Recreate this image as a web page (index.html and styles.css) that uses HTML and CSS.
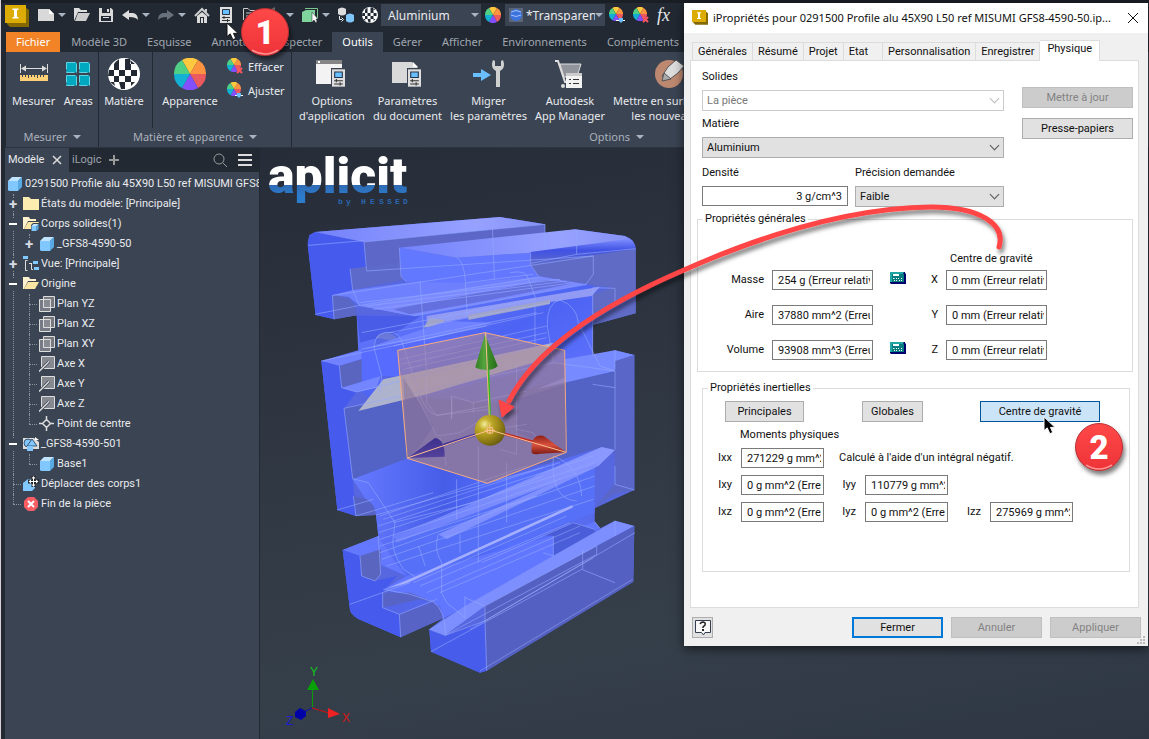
FILE: index.html
```html
<!DOCTYPE html>
<html lang="fr">
<head>
<meta charset="utf-8">
<title>iPropriétés</title>
<link rel="stylesheet" href="styles.css">
</head>
<body>
<svg class="defs" aria-hidden="true">
  <defs>
    <linearGradient id="logoFill" x1="0" y1="0" x2="0" y2="1"><stop offset=".65" stop-color="#fff"/><stop offset=".66" stop-color="#2f6bb4"/><stop offset=".85" stop-color="#2b7ccc"/></linearGradient>
    <linearGradient id="topFace" x1="0" x2="1"><stop offset="0" stop-color="#7482fb"/><stop offset=".7" stop-color="#97a2ff"/><stop offset="1" stop-color="#8490f4"/></linearGradient>
    <linearGradient id="darkBand" x1="0" y1="0" x2="0" y2="1"><stop offset="0" stop-color="#8090ff"/><stop offset=".45" stop-color="#4052e4"/><stop offset="1" stop-color="#5d69c9"/></linearGradient>
    <linearGradient id="midBlue" x1="0" x2="1" y2="1"><stop offset="0" stop-color="#6f82ff"/><stop offset=".5" stop-color="#4d63f3"/><stop offset="1" stop-color="#6477ff"/></linearGradient>
    <linearGradient id="lowBlue" x1="0" x2="1"><stop offset="0" stop-color="#667aff"/><stop offset=".35" stop-color="#465de8"/><stop offset=".6" stop-color="#5670ff"/><stop offset="1" stop-color="#586ae8"/></linearGradient>
    <linearGradient id="sheen" x1="0" x2="1"><stop offset="0" stop-color="#6c7ffb"/><stop offset="1" stop-color="#8c9aff"/></linearGradient>
    <radialGradient id="ball" cx=".32" cy=".3" r=".75"><stop offset="0" stop-color="#f4ec9a"/><stop offset=".25" stop-color="#c4b02c"/><stop offset=".6" stop-color="#a08b19"/><stop offset="1" stop-color="#6b5d10"/></radialGradient>
    <linearGradient id="coneG" x1="0" x2="1"><stop offset="0" stop-color="#2f7d22"/><stop offset=".4" stop-color="#56a53e"/><stop offset=".6" stop-color="#3d8e2a"/><stop offset="1" stop-color="#276b1c"/></linearGradient>
    <linearGradient id="coneR" x1="0" y1="0" x2="0" y2="1"><stop offset="0" stop-color="#8e2018"/><stop offset=".5" stop-color="#d8503c"/><stop offset="1" stop-color="#7c1a14"/></linearGradient>
    <linearGradient id="coneB" x1="0" y1="0" x2="0" y2="1"><stop offset="0" stop-color="#3d318e"/><stop offset="1" stop-color="#54429c"/></linearGradient>
    <linearGradient id="badgeFill" x1="0" y1="0" x2="0" y2="1"><stop offset="0" stop-color="#ff4848"/><stop offset="1" stop-color="#ee3338"/></linearGradient>
    <filter id="shadow" x="-20%" y="-20%" width="150%" height="150%"><feDropShadow dx="2" dy="4" stdDeviation="2" flood-color="#000" flood-opacity=".5"/></filter>

    <symbol id="wheel" viewBox="0 0 32 32">
      <path d="M16 16L8 2A16 16 0 0 1 24 2Z" fill="#ffc83e"/><path d="M16 16L24 2A16 16 0 0 1 32 16Z" fill="#ff9440"/>
      <path d="M16 16H32A16 16 0 0 1 24 30Z" fill="#ea5a5f"/><path d="M16 16L24 30A16 16 0 0 1 8 30Z" fill="#8450ff"/>
      <path d="M16 16L8 30A16 16 0 0 1 0 16Z" fill="#12b0d2"/><path d="M16 16H0A16 16 0 0 1 8 2Z" fill="#4fcf85"/>
    </symbol>
    <symbol id="checkball" viewBox="0 0 32 32">
      <circle cx="16" cy="16" r="16" fill="#fff"/>
      <g fill="#222933"><path d="M10 2q-3 2-4 4h5V1zM17 1h5v5h-5zM1 12h5v6H0zM6 6h5v6H6zM11 12h6v6h-6zM17 6h6v6h-6zM23 12h6v6h-6zM6 18h5v6H6zM17 18h6v6h-6zM11 24h6v7h-4zM23 24h4l-4 4zM22 2l5 4h-4zM2 24h4l1 4z"/></g>
    </symbol>
    <symbol id="cube" viewBox="0 0 16 16"><path d="M1 5L5 1H15L11 5Z" fill="#c0e4ff"/><path d="M1 5H11V15H2L1 14Z" fill="#80c8ff"/><path d="M11 5L15 1V11L11 15Z" fill="#58a9e4"/></symbol>
    <symbol id="folder" viewBox="0 0 16 16"><path d="M0 1H6L8 3H16V14H0Z" fill="#fdecb0"/></symbol>
    <symbol id="folderOpen" viewBox="0 0 16 16"><path d="M0 1H6L7 3H13V5H5L1 13H0Z" fill="#fff3cf"/><path d="M5 6H16L12 13H1Z" fill="#fbe5a2"/></symbol>
    <symbol id="folderBody" viewBox="0 0 16 16"><use href="#folderOpen"/><path d="M8 9L10 7H16V13L14 16H8Z" fill="#3b4453"/><use href="#cube" x="8" y="7" width="8" height="9"/></symbol>
    <symbol id="view" viewBox="0 0 16 16"><path d="M0 0h5v3H0zM10 5h5v3h-5zM11 11h5v3h-5z" fill="#80c8ff"/><path d="M4.500 4.500H2.500V14.500H4.500M6 7.500H9M8.500 8V13.500H10" fill="none" stroke="#ddd"/></symbol>
    <symbol id="plane" viewBox="0 0 16 16"><path d="M4.500 .5H15.500V11.500H4.500Z" fill="#77797f" stroke="#ddd"/><path d="M.5 3.500H11.500V15.500H.5Z" fill="#8f919a" fill-opacity=".7" stroke="#ddd"/><path d="M4.500 3.500V11.500H11.500" fill="none" stroke="#ddd"/></symbol>
    <symbol id="axis" viewBox="0 0 16 16"><path d="M2.500 .5H15.500V12.500H2.500Z" fill="#888a92" stroke="#ddd"/><path d="M0 15.500L10 5.500" stroke="#3b4453" stroke-width="3"/><path d="M0 15.500L10 5.500" stroke="#ddd" stroke-width="1.500"/></symbol>
    <symbol id="point" viewBox="0 0 16 16"><path d="M7.500 3.500L11.500 7.500L7.500 11.500L3.500 7.500ZM7.500 0V4M7.500 11V15M0 7.500H4M11 7.500H15" fill="none" stroke="#ddd" stroke-width="1.500"/></symbol>
    <symbol id="sketch" viewBox="0 0 16 16"><path d="M0 2H11L16 6V13H0Z" fill="#ddd"/><path d="M12 1L16 4H12Z" fill="#fff"/><circle cx="5" cy="7" r="4" fill="#80c8ff" stroke="#3b5570"/><path d="M9 3L14 10H4Z" fill="#80c8ff" stroke="#3b5570"/><path d="M4 10H10V15H4Z" fill="#80c8ff"/></symbol>
    <symbol id="move" viewBox="0 0 16 16"><path d="M0 7L5 3H12V12L9 15H0Z" fill="#80c8ff"/><path d="M10.500 0V11M5 5.500H16" stroke="#222" stroke-width="4"/><path d="M10.500 1V10M6 5.500H15" stroke="#fff"/><path d="M8.500 2.500L10.500 0L12.500 2.500ZM8.500 8.500L10.500 11L12.500 8.500ZM8 3.500L5.500 5.500L8 7.500ZM13 3.500L15.500 5.500L13 7.500Z" fill="#fff"/></symbol>
    <symbol id="end" viewBox="0 0 16 16"><path d="M5 1H11L15 5V11L11 15H5L1 11V5Z" fill="#f95d64"/><path d="M5 5L11 11M11 5L5 11" stroke="#fff" stroke-width="2"/></symbol>
    <symbol id="inv" viewBox="0 0 24 24"><path d="M2 2L20 2L24 5V22H5L2 19Z" fill="#846900"/><path d="M0 0H21V18H0Z" fill="#dcac04"/><path d="M7.500 3.500H13.500V5H12V12H13.500V13.500H7.500V12H9V5H7.500Z" fill="#fff"/></symbol>
    <symbol id="calc" viewBox="0 0 16 12"><path d="M0 0H15V1L16 2V12H1L0 11Z" fill="#00006c"/><path d="M0 0H14L13 2H2V10H0Z" fill="#20a5a5"/><path d="M2 2H14V10H2Z" fill="#077c80"/><path d="M3 2H9V4H3Z" fill="#fff"/><path d="M3 6.500h1.500M6 6.500h1M8 6.500h1M11 6.500h1M4 8.500h1M6 8.500h1M9 8.500h1M11 8.500h1" stroke="#fff"/></symbol>
    <symbol id="pref" viewBox="0 0 12 16"><path d="M0 0H12V16H0Z" fill="#dedede"/><path d="M2.500 2.500H9.500V7.500H2.500Z" fill="#69bfff" stroke="#253345"/><path d="M2 10.500H10M2 13.500H10M4 9v3M7.500 12v3" stroke="#333"/></symbol>
    <symbol id="cursor" viewBox="0 0 14 22"><path d="M1 1V16L4.500 13L7.500 19.500L10.500 18L8 12.500H13Z"/></symbol>
  </defs>
</svg>

<div class="app">
  <header class="quickbar">
    <svg class="brand"><use href="#inv"/></svg>
    <button class="pair" aria-label="Nouveau"><svg class="i16" viewBox="0 0 16 16"><path d="M0 2H11L16 7V14H0Z" fill="#d9d9d9"/><path d="M11 2L16 7H11Z" fill="#fff"/></svg><i class="caret"></i></button>
    <button aria-label="Ouvrir"><svg class="i16" viewBox="0 0 16 16"><path d="M0 14V1H5L7 3H13V5H4Z" fill="#ddd"/><path d="M4 6H16L12 14H1Z" fill="#ccc"/></svg></button>
    <button aria-label="Enregistrer"><svg class="i16" viewBox="0 0 16 16"><path d="M1 1H13L15 3V15H1Z" fill="#d9d9d9"/><path d="M4 1H12V6H4ZM3 9H13V14H3Z" fill="#222933"/><path d="M9 2H11V5H9ZM5 10H11V11H5Z" fill="#ddd"/></svg></button>
    <button class="pair" aria-label="Annuler l'action"><svg class="i16" viewBox="0 0 16 16"><path d="M0 8L7 3V6H11Q16 7 16 13Q14 10 7 10V13Z" fill="#ddd"/></svg><i class="caret"></i></button>
    <button class="pair" aria-label="Rétablir"><svg class="i16" viewBox="0 0 16 16"><path d="M16 8L9 3V6H5Q0 7 0 13Q2 10 9 10V13Z" fill="#68707b"/></svg><i class="caret"></i></button>
    <button aria-label="Accueil"><svg class="i16" viewBox="0 0 16 16"><path d="M1 9L8 2L15 9M12 2V5" fill="none" stroke="#ccc" stroke-width="2"/><path d="M3 9L8 5L13 9V16H3Z" fill="#d9d9d9"/><path d="M6 10H10V16H6Z" fill="#222933"/><path d="M7 11H9V16H7Z" fill="#ddd"/></svg></button>
    <button aria-label="Options"><svg class="i16"><use href="#pref"/></svg></button>
    <button aria-label="Mise à jour"><svg class="i16" viewBox="0 0 16 16"><path d="M1.500 13V1.500H6L8 3.500H14M4 6H12M4 9H12" fill="none" stroke="#ccc"/></svg></button>
    <button class="pair" aria-label="Sélection"><svg class="i16" viewBox="0 0 16 16"><path d="M5 2L9 0V14H5Z" fill="#666"/></svg><i class="caret"></i></button>
    <button class="pair" aria-label="Corps"><svg class="i16" viewBox="0 0 16 16"><path d="M3 1.500H15.500V12" fill="none" stroke="#7cc58f"/><path d="M0 5L4 3H13V13H11V15H0Z" fill="#7fd69c"/><path d="M10 5V15L12 13L14 16L15 14L14 12H16Z" fill="#fff" stroke="#222933" stroke-width=".5"/></svg><i class="caret"></i></button>
    <button aria-label="Convertir"><svg class="i16" viewBox="0 0 16 16"><path d="M0 2Q4-1 8 2V7Q4 10 0 7Z" fill="#ddd"/><path d="M8 8Q12 5 16 8V14Q12 17 8 14Z" fill="#7fc7fb"/><path d="M1.500 9V12.500H4M3.500 10.500L5.500 12.500L3.500 14.500" fill="none" stroke="#eee"/></svg></button>
    <button aria-label="Matériaux"><svg class="i16"><use href="#checkball"/></svg></button>
    <label class="dark-select"><select aria-label="Matière active"><option>Aluminium</option></select><i class="caret"></i></label>
    <button class="tight" aria-label="Apparences"><svg class="i16"><use href="#wheel"/></svg></button>
    <label class="dark-select swatch"><svg class="i14" viewBox="0 0 14 14"><path d="M0 0H14V14H0Z" fill="#5b6578"/><circle cx="7" cy="7" r="6" fill="#3f73dc"/><path d="M2 4Q7 1 12 4M2 7Q7 10 12 7" fill="none" stroke="#9dc2ff"/></svg><select aria-label="Apparence active"><option>*Transparent</option></select><i class="caret"></i></label>
    <button class="tight" aria-label="Ajuster l'apparence"><svg class="i16" viewBox="0 0 16 16"><use href="#wheel" width="14" height="14"/><path d="M7 13.500H16" stroke="#fff"/><path d="M10 11H14V14L12 16L10 14Z" fill="#69bfff"/></svg></button>
    <button aria-label="Effacer l'apparence"><svg class="i16" viewBox="0 0 16 16"><use href="#wheel" width="14" height="14"/><path d="M10 10L15 15M15 10L10 15" stroke="#ff5560" stroke-width="2"/></svg></button>
    <button class="fx" aria-label="Paramètres">fx</button>
  </header>

  <nav class="tabs">
    <button class="file">Fichier</button><button>Modèle 3D</button><button>Esquisse</button><button>Annoter</button><button>Inspecter</button><button class="active">Outils</button><button>Gérer</button><button>Afficher</button><button>Environnements</button><button>Compléments</button>
  </nav>

  <section class="ribbon">
    <div class="group measure">
      <div class="tools">
        <button class="tool"><svg class="i32" viewBox="0 0 32 32"><path d="M2.500 6V15M29.500 6V15M4 10.500H28" stroke="#ddd"/><path d="M3 10.500L8 7.500V13.500ZM29 10.500L24 7.500V13.500Z" fill="#ddd"/><path d="M2 17H30V23H2Z" fill="#ffcf75"/><path d="M4.500 17v2M7.500 17v2M10.500 17v3M13.500 17v2M16.500 17v2M19.500 17v3M22.500 17v2M25.500 17v2" stroke="#3b4453"/></svg>Mesurer</button>
        <button class="tool"><svg class="i32" viewBox="0 0 32 32"><path d="M4.500 4.500H14.500V14.500H4.500ZM17.500 4.500H27.500V14.500H17.500ZM4.500 17.500H14.500V27.500H4.500ZM17.500 17.500H27.500V27.500H17.500Z" fill="#00a9c0" stroke="#62d3e0" stroke-dasharray="9 2"/></svg>Areas</button>
      </div>
      <div class="group-name">Mesurer <i class="caret"></i></div>
    </div>
    <div class="group material">
      <div class="tools">
        <button class="tool first"><svg class="i32"><use href="#checkball"/></svg>Matière</button>
        <button class="tool look"><svg class="i32"><use href="#wheel"/></svg>Apparence</button>
        <div class="stack">
          <button><svg class="i16" viewBox="0 0 16 16"><use href="#wheel" width="14" height="14"/><path d="M10 10L15 15M15 10L10 15" stroke="#ff5560" stroke-width="2"/></svg>Effacer</button>
          <button><svg class="i16" viewBox="0 0 16 16"><use href="#wheel" width="14" height="14"/><path d="M8 13.500H16" stroke="#fff"/><path d="M10 11H14V14L12 16L10 14Z" fill="#69bfff"/></svg>Ajuster</button>
        </div>
      </div>
      <div class="group-name">Matière et apparence <i class="caret"></i></div>
    </div>
    <div class="group options">
      <div class="tools">
        <button class="tool"><svg class="i32" viewBox="0 0 32 32"><path d="M0 2H26V26H0Z" fill="#f3f3f3"/><path d="M0 2H26V6H0Z" fill="#858585"/><path d="M2 3h2v2H2z" fill="#fff"/><path d="M15 10H30V30H15Z" fill="#3b4453"/><use href="#pref" x="16" y="11" width="13" height="18"/></svg>Options<br>d'application</button>
        <button class="tool"><svg class="i32" viewBox="0 0 32 32"><path d="M1 4H21L27 10V25H1Z" fill="#d9d9d9"/><path d="M22 4L27 9H22Z" fill="#fff"/><path d="M16 10H31V30H16Z" fill="#3b4453"/><use href="#pref" x="17" y="11" width="13" height="18"/></svg>Paramètres<br>du document</button>
        <button class="tool"><svg class="i32" viewBox="0 0 32 32"><path d="M0 15H8V11L18 17L8 23V19H0Z" fill="#69bfff"/><path d="M20 2Q17 10 23 13V29H27V13Q33 10 30 2L28 3V8H22V3Z" fill="#d0d0d0"/></svg>Migrer<br>les paramètres</button>
        <button class="tool"><svg class="i32" viewBox="0 0 32 32"><path d="M1 3H4L11 24H15" fill="none" stroke="#ddd" stroke-width="2"/><path d="M6 6H27L23 19H10Z" fill="#92969c" stroke="#ddd"/><circle cx="9" cy="28" r="2" fill="#ddd"/><path d="M12 15H28V30H12Z" fill="#f2f2f2"/><path d="M12 15H28V18H12Z" fill="#ccc"/><path d="M15 21.500H17M19 21.500H25M15 25.500H17M19 25.500H25" stroke="#333"/></svg>Autodesk<br>App Manager</button>
        <button class="tool"><svg class="i32" viewBox="0 0 32 32"><circle cx="15" cy="16" r="14" fill="#bd8870"/><path d="M8 18L14 9L22 2L30 8L24 15L16 21Z" fill="#ddd" stroke="#555"/><path d="M10 15L17 21L8 23Z" fill="#aaa" stroke="#555"/></svg>Mettre en surbrillance<br>les nouveautés</button>
      </div>
      <div class="group-name">Options <i class="caret"></i></div>
    </div>
  </section>

  <main class="workspace">
    <aside class="browser">
      <div class="browser-tabs">
        <button class="on">Modèle <svg class="i10" viewBox="0 0 10 10"><path d="M1 1L9 9M9 1L1 9" stroke="#ddd" stroke-width="1.500"/></svg></button>
        <button>iLogic</button>
        <button aria-label="Ajouter"><svg class="i10" viewBox="0 0 10 10"><path d="M5 0V10M0 5H10" stroke="#999" stroke-width="2"/></svg></button>
        <button class="push" aria-label="Rechercher"><svg class="i14" viewBox="0 0 14 14"><circle cx="6" cy="6" r="5" fill="none" stroke="#999"/><path d="M10 10L14 14" stroke="#999"/></svg></button>
        <button aria-label="Menu"><svg class="i14" viewBox="0 0 14 14"><path d="M0 2H14M0 7H14M0 12H14" stroke="#ddd" stroke-width="2"/></svg></button>
      </div>
      <div class="root"><svg class="i16"><use href="#cube"/></svg>0291500 Profile alu 45X90 L50 ref MISUMI GFS8-</div>
      <ul class="tree">
        <li><div class="row"><button class="tog" aria-label="Développer">+</button><svg class="i16"><use href="#folder"/></svg>États du modèle: [Principale]</div></li>
        <li><div class="row"><button class="tog minus" aria-label="Réduire"></button><svg class="i16"><use href="#folderBody"/></svg>Corps solides(1)</div>
          <ul><li><div class="row"><button class="tog" aria-label="Développer">+</button><svg class="i16"><use href="#cube"/></svg>_GFS8-4590-50</div></li></ul></li>
        <li><div class="row"><button class="tog" aria-label="Développer">+</button><svg class="i16"><use href="#view"/></svg>Vue: [Principale]</div></li>
        <li><div class="row"><button class="tog minus" aria-label="Réduire"></button><svg class="i16"><use href="#folderOpen"/></svg>Origine</div>
          <ul>
            <li><div class="row leaf"><svg class="i16"><use href="#plane"/></svg>Plan YZ</div></li>
            <li><div class="row leaf"><svg class="i16"><use href="#plane"/></svg>Plan XZ</div></li>
            <li><div class="row leaf"><svg class="i16"><use href="#plane"/></svg>Plan XY</div></li>
            <li><div class="row leaf"><svg class="i16"><use href="#axis"/></svg>Axe X</div></li>
            <li><div class="row leaf"><svg class="i16"><use href="#axis"/></svg>Axe Y</div></li>
            <li><div class="row leaf"><svg class="i16"><use href="#axis"/></svg>Axe Z</div></li>
            <li><div class="row leaf"><svg class="i16"><use href="#point"/></svg>Point de centre</div></li>
          </ul></li>
        <li><div class="row"><button class="tog minus" aria-label="Réduire"></button><svg class="i16"><use href="#sketch"/></svg>_GFS8-4590-501</div>
          <ul><li><div class="row leaf"><svg class="i16"><use href="#cube"/></svg>Base1</div></li></ul></li>
        <li><div class="row leaf"><svg class="i16"><use href="#move"/></svg>Déplacer des corps1</div></li>
        <li><div class="row leaf"><svg class="i16"><use href="#end"/></svg>Fin de la pièce</div></li>
      </ul>
    </aside>

    <section class="viewport">
      <svg class="scene" viewBox="260 148 889 591" preserveAspectRatio="xMinYMin slice" role="img" aria-label="Profilé aluminium">
        <text class="logo" x="268" y="193" fill="url(#logoFill)">aplicit</text>
        <text class="sublogo" y="204" x="338 346 361 370 379 387 395 403" fill="#2c66b0">byHESSED</text>
        <g transform="translate(260 146) scale(.33333)">
          <path fill="#5767df" d="M143 290L148 268L165 258L720 213L855 235V265L945 250L1095 270Q1127 280 1127 310V502L998 537V630L1065 613L1123 627V1032L1004 1087V1127L1020 1147L1065 1124L1123 1140L1120 1307L680 1574L660 1580L513 1517L508 1450L550 1417L422 1474L295 1419Q272 1405 270 1392L248 1212L355 1170L348 1107L288 1110L232 1092L184 645L304 610L290 508L225 520L167 507Z"/>
          <path fill="#465bee" d="M143 298L148 268L165 258L312 288L320 375L270 368L278 432L217 448L222 520L167 507Z"/>
          <path fill="url(#topFace)" d="M165 258L720 213L855 235L312 288Z"/>
          <path fill="#5c67c7" d="M312 288L855 235V265L418 305L423 348L320 375Z"/>
          <path fill="#5e6ac9" d="M270 368L423 348L427 402L278 432Z"/>
          <path fill="#5b67c4" d="M217 448Q250 450 270 460Q288 480 290 508L222 520Z"/>
          <path fill="#6f80ff" d="M217 448L278 432L480 405L620 390L835 385L910 405L460 510L300 480L265 452Z"/>
          <path fill="#6178ff" d="M418 305L590 335Q612 345 615 405L440 408L423 390Z"/>
          <path fill="#6377ff" d="M590 335L812 320V357L835 392L620 410L440 408L615 385Z"/>
          <path fill="url(#topFace)" d="M418 305L945 250L1095 270L1118 285L812 320L590 335Z"/>
          <path fill="#606bc6" d="M812 340L1120 290L1127 310V502L998 537L998 445L1060 425L980 415L835 390L812 357Z"/>
          <path fill="url(#darkBand)" d="M812 318L1110 278Q1125 290 1127 308L812 355Z"/>
          <path fill="#7b8bff" d="M300 480L840 393L980 415L460 510Z"/>
          <path fill="#5763cd" d="M400 490L860 402L940 412L690 462L450 505Z" opacity=".65"/>
          <path fill="url(#midBlue)" d="M290 508L460 510L980 415L1010 425L998 445V630L880 655L365 780L300 735Z"/>
          <path fill="#485ce8" d="M290 508L480 510L410 560L300 590Z"/>
          <path fill="#929bf4" d="M500 510L1020 422L995 450L870 468L550 528L500 545Z"/>
          <path fill="#9fa4c8" d="M510 515L553 522L550 535L490 545ZM625 507L870 461V474L625 522ZM348 575Q380 540 427 590Z"/>
          <path fill="#5365e0" d="M342 605Q345 550 400 560Q420 570 430 595L420 690L365 700Z" opacity=".7"/>
          <path fill="#7082ff" d="M184 645L304 612L560 525L700 530L430 600L238 660Z"/>
          <path fill="#576cff" d="M304 612L420 590L680 560L430 690L365 690L305 720Z"/>
          <path fill="#465bee" d="M184 645L238 660L245 725L290 738L252 787L278 1000L288 1110L232 1092Z"/>
          <path fill="#5a65c0" d="M238 660L305 640V730L290 738L245 725Z"/>
          <path fill="#7385ff" d="M245 725L362 690L350 725L290 738Z"/>
          <path fill="#5362c5" d="M252 787L425 750L700 770L830 720L1065 675V920L820 960L680 1010L278 1000Z"/>
          <path fill="#aeb3cd" d="M295 795L370 700L880 590L820 650L500 745Z"/>
          <path fill="#788aff" d="M914 640L1065 613L1123 627L1065 648V675L830 730L914 695Z"/>
          <path fill="#5a67c8" d="M1065 645L1123 627V1032L1060 1045L1004 1087L1065 1010Z"/>
          <path fill="url(#lowBlue)" d="M278 1000L442 937L682 1012L1025 903L1065 912L1003 965V1127L880 1200L440 1300L355 1170L348 1107Z"/>
          <path fill="#5663c4" d="M280 1050L320 1060Q345 1075 348 1107L288 1110Z"/>
          <path fill="url(#sheen)" d="M400 1170L560 1105L1025 903L1065 912L1015 960L410 1200Z"/>
          <path fill="#5670f8" d="M410 1190L1004 965V1100L460 1295Q380 1240 400 1170Z"/>
          <path fill="#8090ff" d="M535 1165L1020 948L990 972L560 1180Z"/>
          <path fill="#6478ff" d="M248 1212L355 1170L400 1240L440 1290L300 1230Z"/>
          <path fill="#465bee" d="M248 1212L300 1230L305 1290L345 1305L410 1290L368 1340V1385L418 1405L422 1474L295 1419Q272 1405 270 1392Z"/>
          <path fill="#5a65c0" d="M300 1230L362 1210V1285L345 1305L305 1290Z"/>
          <path fill="#6277ff" d="M370 1330L440 1290L880 1170L1004 1127L1020 1147L870 1250L550 1417L540 1380L480 1360Z"/>
          <path fill="#5764c6" d="M368 1340L450 1340L520 1368Q545 1390 548 1415L422 1474L418 1405L368 1385Z"/>
          <path fill="#5366ea" d="M368 1385L480 1360L520 1368L418 1405Z"/>
          <path fill="#a5afff" d="M465 1292L935 1078L940 1084L500 1285L440 1312L375 1330Z"/>
          <path fill="#4658cf" d="M850 1168L940 1128L1004 1150L1010 1195L880 1240V1170Z" opacity=".8"/>
          <path fill="#7d8fff" d="M508 1450L615 1380L1065 1124L1123 1140L675 1380L555 1468Z"/>
          <path fill="#485cec" d="M508 1450L555 1468L675 1425L680 1574L660 1580L513 1517Z"/>
          <path fill="#5561c2" d="M674 1380L1123 1140L1120 1307L680 1574Z"/>
          <path fill="none" stroke="#93a8ff" stroke-width="3" opacity=".6" d="M145 298L312 284M312 288L320 375L1000 330V385L975 418M270 368L278 432L300 480M217 448L222 520M165 505L300 478L840 393M217 448L1000 330M312 288L855 235V310M418 305L423 392L440 408M590 335Q612 345 616 405L622 510M697 230L703 400M950 252V325L812 352M812 320V357L835 390M1127 308L950 325M460 510L980 415M300 470L900 400M320 480L920 405M340 490L940 410M305 560L825 460M304 610L830 500M480 405L490 545L500 680M750 380Q800 370 805 400L825 450V600M862 540Q860 470 900 462Q950 480 955 530L1020 660M862 540L880 650M998 430V630M1065 427V470M998 425L1065 427M184 645L680 540M238 660L245 725L290 738L840 600M342 605L365 690L360 740M342 605Q345 550 400 560Q420 565 430 600L480 750Q500 800 530 808L690 780M252 787L278 998L325 1010L405 1130L400 1170Q390 1210 430 1270L465 1292M280 1050L288 1110L520 1040M252 787L880 650L1065 675V910M1020 660L1065 675M1065 613V670M575 750L640 770L800 735M575 750V820M998 715L1065 725M232 1092L340 1060M348 1107L900 950M355 1140L1000 930M355 1160L1004 950M360 1180L1004 965M360 1220L1004 990M365 1240L1004 1020M380 1260L1000 1060M400 1130L640 1070L850 990M590 1000V1120M655 900V1250M740 950V1130M880 930Q960 960 965 1050M880 930Q870 1060 950 1065M300 1230L305 1290L345 1305L362 1285L355 1170M270 1375L450 1310M368 1340V1385L418 1405L422 1474M418 1405L530 1360M370 1330L450 1345L520 1368Q555 1390 557 1465M508 1450L555 1468L1010 1225M555 1468L675 1425L680 1574M615 1350V1415M615 1355L675 1380L1010 1200V1225M675 1380V1425L1125 1160M513 1517L965 1270L1065 1310M968 1210V1270M475 1200Q490 1240 495 1260M535 1165Q520 1210 545 1250V1340L560 1370L615 1415M600 1165V1220M665 1250L940 1130L1004 1150M880 1170V1230L850 1220M1004 1127L1020 1147M1065 960V1015L1123 1032M1065 1124V1170"/>
          <path fill="none" stroke="#aebdff" stroke-width="3" opacity=".4" d="M660 1575L1118 1300M630 1450L1000 1235M480 1320L930 1130M500 1340L960 1140M540 1340L960 1160M460 1310L920 1110M360 1110L800 960M370 1120L850 965M360 1200L830 1050M385 560L870 470M400 600L850 500M420 640L860 540M425 655L860 560M430 670L860 575M430 690L850 600M620 410L820 385M490 720L840 640"/>
          <path fill="#a98495" fill-opacity=".6" stroke="#f6ab80" stroke-width="3" d="M413 613L675 560L914 613L919 919L682 1012L442 937Z"/>
          <path fill="#6b5c9c" opacity=".3" d="M430 695L520 840L480 900L442 937ZM770 760L914 715L919 919L770 860Z"/>
          <path fill="none" stroke="#aaa3ce" stroke-width="2" opacity=".5" d="M440 690L530 870L600 860L650 830M500 680V770L530 808L690 790M575 755V820M770 650V850L820 860L850 920M640 770V800M720 910L770 925V835M540 875L560 960M700 850L800 835"/>
          <path stroke="#34bb20" stroke-width="7" d="M682 600L690 830"/><path stroke="#f3b486" stroke-width="3" d="M676 562L690 852"/>
          <path d="M675 565L713 660Q700 673 680 671Q657 672 646 664Z" fill="url(#coneG)"/><path stroke="#ffc190" stroke-width="3" d="M677 560L682 671"/>
          <path stroke="#42329c" stroke-width="8" d="M550 897L690 852"/><path stroke="#c22b22" stroke-width="8" d="M690 852L830 890"/>
          <path d="M442 936L525 876Q555 880 554 932Z" fill="url(#coneB)"/><path d="M918 919L850 869Q810 862 815 920Q822 928 840 923Z" fill="url(#coneR)"/>
          <circle cx="690" cy="853" r="46" fill="url(#ball)"/>
          <path fill="none" stroke="#ffc190" stroke-width="3" d="M442 936L690 852L918 919M690 830V865M675 853H705M682 845H698V861H682Z"/>
        </g>
        <g class="triad">
          <path d="M312.500 707V690" stroke="#0a9a0a"/><path d="M313 679L319 690H307Z" fill="#0aa00a"/>
          <path d="M312 708L329 713" stroke="#d01010"/><path d="M328 708L340 714L328 718Z" fill="#e22"/>
          <path d="M312 708L304 712" stroke="#1010b0"/><path d="M295 712L300 708L306 711V716L301 720L295 717Z" fill="#0000a8"/>
          <text x="310" y="676" fill="#10c81a">Y</text><text x="342" y="722" fill="#d81818">X</text><text x="286" y="725" fill="#1c1cd8">Z</text>
        </g>
      </svg>
    </section>
  </main>

  <form class="dialog">
    <header class="title"><svg class="i16"><use href="#inv"/></svg><span>iPropriétés pour 0291500 Profile alu 45X90 L50 ref MISUMI GFS8-4590-50.ip...</span><button type="button" aria-label="Fermer la fenêtre"><svg class="i12" viewBox="0 0 12 12"><path d="M1 1L11 11M11 1L1 11" stroke="#111"/></svg></button></header>
    <nav class="sheets"><button type="button">Générales</button><button type="button">Résumé</button><button type="button">Projet</button><button type="button" class="roomy">Etat</button><button type="button">Personnalisation</button><button type="button">Enregistrer</button><button type="button" class="current">Physique</button></nav>
    <div class="sheet">
      <div class="top">
        <div class="fields">
          <label for="solids">Solides</label>
          <div class="select off"><select id="solids" disabled><option>La pièce</option></select></div>
          <label for="mat">Matière</label>
          <div class="select"><select id="mat"><option>Aluminium</option></select></div>
          <div class="pair-fields">
            <div><label for="dens">Densité</label><input id="dens" class="num" value="3 g/cm^3"></div>
            <div><label for="prec">Précision demandée</label><div class="select"><select id="prec"><option>Faible</option></select></div></div>
          </div>
        </div>
        <div class="actions"><button type="button" class="btn" disabled>Mettre à jour</button><button type="button" class="btn">Presse-papiers</button></div>
      </div>
      <fieldset class="general">
        <legend>Propriétés générales</legend>
        <div class="general-grid">
          <span class="head">Centre de gravité</span>
          <label for="mass">Masse</label><input id="mass" value="254 g (Erreur relative = 0,000000%)"><svg class="calc"><use href="#calc"/></svg><label for="gx">X</label><input id="gx" value="0 mm (Erreur relative = 0,000000%)">
          <label for="area">Aire</label><input id="area" value="37880 mm^2 (Erreur relative)"><span></span><label for="gy">Y</label><input id="gy" value="0 mm (Erreur relative = 0,000000%)">
          <label for="vol">Volume</label><input id="vol" value="93908 mm^3 (Erreur relative)"><svg class="calc"><use href="#calc"/></svg><label for="gz">Z</label><input id="gz" value="0 mm (Erreur relative = 0,000000%)">
        </div>
      </fieldset>
      <fieldset class="inertia">
        <legend>Propriétés inertielles</legend>
        <div class="modes"><button type="button" class="btn principal">Principales</button><button type="button" class="btn global">Globales</button><button type="button" class="btn gravity">Centre de gravité</button></div>
        <div class="moments">Moments physiques</div>
        <div class="inertia-grid">
          <label for="ixx">Ixx</label><input id="ixx" value="271229 g mm^2 (Erreur)"><span class="note">Calculé à l'aide d'un intégral négatif.</span>
          <label for="ixy">Ixy</label><input id="ixy" value="0 g mm^2 (Erreur)"><label for="iyy">Iyy</label><input id="iyy" value="110779 g mm^2 (Erreur)"><span class="blank"></span>
          <label for="ixz">Ixz</label><input id="ixz" value="0 g mm^2 (Erreur)"><label for="iyz">Iyz</label><input id="iyz" value="0 g mm^2 (Erreur)"><label for="izz">Izz</label><input id="izz" value="275969 g mm^2 (Erreur)">
        </div>
      </fieldset>
    </div>
    <footer class="foot">
      <button type="button" class="help" aria-label="Aide"><svg class="i18" viewBox="0 0 18 18"><path d="M1.500 1.500H16.500V13.500H11L9.500 16L7.500 13.500H1.500Z" fill="#f8f8f8" stroke="#333f50"/><path d="M6 5Q7 3 9 3Q12 3.500 11 6L9 8V9" fill="none" stroke="#222" stroke-width="1.500"/><path d="M8 10h2v2H8z" fill="#222"/></svg></button>
      <button type="button" class="btn default">Fermer</button><button type="button" class="btn" disabled>Annuler</button><button type="button" class="btn" disabled>Appliquer</button>
      <svg class="grip" viewBox="0 0 8 8"><path d="M6 0h2v2H6zM3 3h2v2H3zM6 3h2v2H6zM0 6h2v2H0zM3 6h2v2H3zM6 6h2v2H6z" fill="#bbb"/></svg>
    </footer>
  </form>

  <svg class="notes" viewBox="0 0 1149 739" preserveAspectRatio="xMinYMin slice" aria-hidden="true">
    <g filter="url(#shadow)"><path d="M999 247C1006 224 980 207 931 207C840 208 745 243 684 270C600 306 535 350 509 401" fill="none" stroke="#ff4444" stroke-width="5" stroke-linecap="round"/><path d="M499 400L514 407L502 417Z" fill="#ff4444" stroke="#ff4444"/></g>
    <use href="#cursor" x="226" y="22" width="13" height="20" fill="#fff" stroke="#111"/>
    <use href="#cursor" x="1043" y="416" width="13" height="20" fill="#000" stroke="#fff"/>
    <g filter="url(#shadow)"><circle cx="265" cy="32" r="23.500" fill="url(#badgeFill)" stroke="#b93034"/><circle cx="1099" cy="447" r="23.500" fill="url(#badgeFill)" stroke="#b93034"/></g>
    <path d="M252 50Q265 58 278 50M1086 465Q1099 473 1112 465" fill="none" stroke="#ff9292" stroke-width="1.500"/>
    <text class="badge" x="265" y="44">1</text><text class="badge" x="1099" y="459">2</text>
  </svg>
</div>
</body>
</html>
```
FILE: styles.css
```css
* { box-sizing: border-box; }
body { margin: 0; background: #1b2028; font: 11px/15px "Noto Sans", "Open Sans", sans-serif; color: #e8eaed; }
button, select, input { font: inherit; color: inherit; margin: 0; }
button { border: 0; padding: 0; background: none; white-space: nowrap; }
svg { display: block; flex: none; }
.defs { position: absolute; width: 0; height: 0; }
.i10 { width: 10px; height: 10px; }
.i12 { width: 12px; height: 12px; }
.i14 { width: 14px; height: 14px; }
.i16 { width: 16px; height: 16px; }
.i18 { width: 18px; height: 18px; }
.i32 { width: 32px; height: 32px; }
.caret { display: inline-block; flex: none; width: 0; border: 4px solid transparent; border-top-color: #a9b4c2; border-bottom: 0; }

.app { position: relative; min-height: 100vh; display: flex; flex-direction: column; padding: 3px 0 0 4px; background: #222933; border-left: 1px solid #d9d3d8; box-shadow: inset 0 3px #1a1e25; overflow: hidden; }
.quickbar { display: flex; align-items: center; gap: 8px; height: 29px; padding-bottom: 5px; }
.quickbar .brand { width: 24px; height: 24px; margin: 4px 1px 0 0; }
.pair { display: flex; align-items: center; gap: 4px; }
.dark-select { display: flex; align-items: center; width: 100px; height: 22px; margin-left: -5px; background: #3b4453; padding-right: 2px; font-size: 12px; }
.dark-select select { flex: 1; min-width: 0; border: 0; background: none; appearance: none; padding-left: 7px; }
.tight { margin-left: -4px; }
.swatch { margin-left: -4px; padding-left: 4px; }
.swatch select { padding-left: 3px; overflow: hidden; }
.quickbar .fx { font: italic 18px/20px "Liberation Serif", serif; }

.tabs { display: flex; height: 20px; padding-left: 1px; }
.tabs button { padding: 0 10px 2px; color: #a0a7b0; }
.tabs .file { background: #f28427; color: #fff; margin-right: 1px; }
.tabs .active { background: #3b4453; color: #fff; }

.ribbon { display: flex; height: 95px; margin-left: 1px; background: #3b4453; }
.group { display: flex; flex-direction: column; border-right: 1px solid #222933; }
.group-name { margin-top: auto; padding-bottom: 3px; text-align: center; color: #aab1bb; }
.group-name .caret { margin: 0 0 2px 3px; }
.tools { display: flex; height: 76px; }
.tool { display: flex; flex-direction: column; align-items: center; gap: 3px; padding-top: 6px; text-align: center; justify-content: flex-start; }
.measure { width: 93px; }
.measure .tools { padding-left: 6px; gap: 7px; }
.material { width: 193px; }
.tool.first { width: 54px; padding-right: 3px; border-right: 1px solid #222933; }
.tool.look { width: 74px; }
.stack { display: flex; flex-direction: column; gap: 8px; padding-top: 6px; }
.stack button { display: flex; align-items: center; gap: 5px; }
.options { flex: 1; border: 0; }
.options .tools { padding-left: 7px; gap: 8px; }
.options .group-name { margin-right: 208px; }

.workspace { flex: 1; display: flex; min-height: 0; border-top: 1px solid #2c343f; }
.browser { width: 254px; flex: none; background: #3b4453; font: 11px/14px Roboto, sans-serif; }
.browser-tabs { display: flex; height: 24px; margin-bottom: 2px; background: #222933; color: #9da3ab; gap: 8px; padding-right: 7px; align-items: center; }
.browser-tabs button { display: flex; align-items: center; gap: 8px; height: 24px; }
.browser-tabs .on { width: 64px; padding-left: 3px; background: #3b4453; color: #e8eaed; margin-right: -5px; }
.browser-tabs .push { margin-left: auto; margin-right: 3px; }
.root { display: flex; align-items: center; gap: 2px; height: 20px; padding-left: 2px; overflow: hidden; white-space: nowrap; }
.tree, .tree ul { list-style: none; margin: 0; padding: 0; }
.tree ul { margin-left: 16px; }
.tree li { position: relative; }
.tree li::before { content: ""; position: absolute; left: 8px; top: 0; bottom: 0; border-left: 1px dotted #8b929d; }
.tree li:last-child::before { bottom: auto; height: 10px; }
.row { display: flex; align-items: center; gap: 2px; height: 20px; }
.row.leaf::before { content: ""; width: 8px; margin-left: 8px; border-top: 1px dotted #8b929d; }
.tog { position: relative; width: 16px; height: 12px; background: #3b4453; color: #d6dbe2; font: bold 15px/12px Roboto, sans-serif; }
.tog.minus::before { content: ""; display: block; width: 8px; height: 2px; margin-left: 4px; background: #fff; }
.viewport { flex: 1; position: relative; margin-left: 1px; background: linear-gradient(170deg, #262c38, #303843 45%, #353f4a 75%, #2e3644); }
.scene { position: absolute; inset: 0; width: 100%; height: 100%; }
.logo { font: 900 50px Roboto, sans-serif; }
.sublogo { font: bold 8px "Liberation Mono", monospace; }
.triad text { font: 12px "Liberation Sans", sans-serif; }

.dialog { position: absolute; left: 683px; top: 3px; width: 464px; background: #f0f0f0; color: #111; font: 11px/14px Roboto, sans-serif; box-shadow: 0 3px 10px #0009; }
.title { display: flex; align-items: center; gap: 5px; height: 30px; padding: 0 9px 0 8px; background: #fff; font: 11px/16px "Noto Sans", sans-serif; }
.title span { flex: 1; white-space: nowrap; }
.sheets { display: flex; align-items: flex-end; height: 27px; padding-left: 8px; }
.sheets button { height: 18px; padding: 0 5px; border: 1px solid #dcdcdc; border-width: 1px 1px 0 0; }
.sheets button:first-child { border-left-width: 1px; }
.sheets .roomy { padding-right: 14px; }
.sheets .current { position: relative; z-index: 1; height: 21px; margin-bottom: -1px; padding: 0 7px 4px; background: #fff; }
.sheet { margin: 0 9px 0 6px; padding: 9px 5px 35px 7px; border: 1px solid #dcdcdc; background: #fff; }
.top { display: flex; justify-content: space-between; padding-left: 4px; }
.fields { width: 302px; }
.fields label { display: block; margin-bottom: 6px; }
.fields > .select { margin-bottom: 6px; }
.select { position: relative; }
.select select { display: block; width: 100%; height: 21px; padding: 0 4px; border: 1px solid #adadad; border-radius: 0; background: #e1e1e1; appearance: none; }
.select.off select { background: #fff; color: #777; border-color: #ccc; opacity: 1; }
.select::after { content: ""; position: absolute; right: 6px; top: 5px; width: 6px; height: 6px; border: solid #555; border-width: 0 1px 1px 0; transform: rotate(45deg); }
.select.off::after { border-color: #bbb; }
.pair-fields { display: grid; grid-template-columns: 146px 149px; gap: 7px; margin-top: 8px; }
input { display: block; width: 100%; height: 20px; padding: 0 2px 0 5px; border: 1px solid #7a7a7a; background: #fff; border-radius: 0; }
input.num { text-align: right; padding-right: 5px; }
.btn { height: 21px; border: 1px solid #adadad; background: #e1e1e1; }
.btn:disabled { background: #ccc; border-color: #bfbfbf; color: #838383; }
.actions { display: flex; flex-direction: column; gap: 10px; width: 111px; padding-top: 17px; }
fieldset { margin: 0; padding: 0; border: 1px solid #dcdcdc; min-width: 0; }
legend { margin-left: 5px; padding: 0 2px; }
.general { margin: 5px 0 0 -1px; padding: 26px 0 11px; }
.general-grid { display: grid; grid-template-columns: 66px 101px 25px 24px 101px; column-gap: 8px; align-items: center; justify-items: end; }
.general-grid .head { grid-column: 5; justify-self: start; padding-left: 4px; margin-bottom: 4px; }
.general-grid input, .general-grid label { margin-bottom: 15px; }
.general-grid input:nth-last-of-type(-n+2), .general-grid label:nth-last-of-type(-n+2) { margin-bottom: 0; }
.calc { width: 16px; height: 12px; margin-top: 2px; align-self: start; }
.inertia { margin: 9px 3px 0 4px; padding: 6px 0 49px; }
.modes { display: flex; padding-left: 22px; }
.principal { width: 79px; }
.global { width: 61px; margin: 0 57px 0 58px; }
.gravity { width: 120px; background: #cce4f7; border-color: #00549a; }
.moments { margin: 6px 0 6px 37px; }
.inertia-grid { display: grid; grid-template-columns: 31px 83px 27px 83px 28px 83px; gap: 7px; align-items: center; justify-items: end; }
.inertia-grid label { padding-right: 2px; }
.note { grid-column: 3 / 7; justify-self: start; padding-left: 8px; }
.blank { grid-column: 5 / 7; }
.foot { display: flex; position: relative; gap: 8px; padding: 9px 7px 8px 8px; }
.foot .btn { width: 91px; }
.foot .default { border: 2px solid #0078d7; margin-left: auto; }
.help { display: flex; align-items: center; justify-content: center; width: 21px; height: 21px; border: 1px solid #adadad; background: #e1e1e1; }
.grip { position: absolute; right: 3px; bottom: 2px; width: 8px; height: 8px; }
.notes { position: absolute; left: -1px; top: 0; width: calc(100% + 1px); height: 100%; pointer-events: none; }
.badge { font: 900 33px Roboto, sans-serif; text-anchor: middle; fill: #fff; }
```
